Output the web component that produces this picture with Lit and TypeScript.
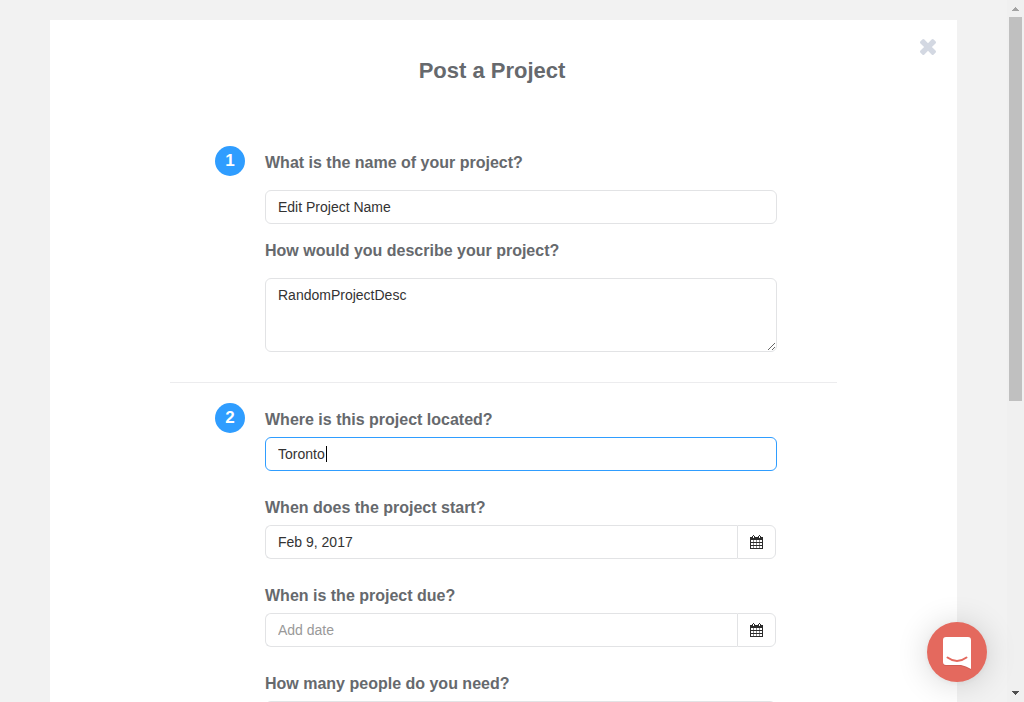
import { LitElement, html, css, svg } from "lit";
import { customElement } from "lit/decorators.js";

const calendarIcon = svg`
  <path d="M0 2h13v3H0zM0 5h1v9H0zM12 5h1v9h-1zM1 7h11v1H1zM1 10h11v1H1zM1 13h11v1H1z"/>
  <path d="M3 5h1v8H3zM6 5h1v8H6zM9 5h1v8H9z" opacity=".55"/>
  <path d="M2 1h1V0h1v1h1v3H2zM8 1h1V0h1v1h1v3H8z"/>
  <path d="M3 1h1v2H3zM9 1h1v2H9z" fill="#fff"/>`;

@customElement("app-root")
export class AppRoot extends LitElement {
  static styles = css`
    :host {
      display: grid;
      grid-template-columns: minmax(0, 1fr) 17px;
      height: 100vh;
      overflow: hidden;
      background: #f2f2f2;
      color: #66696d;
      font-family: "Liberation Sans", Arial, sans-serif;
    }
    * {
      box-sizing: border-box;
    }
    .page {
      min-height: 0;
      overflow: hidden;
      padding: 20px 50px 0;
    }
    .panel {
      background: #fff;
      padding-bottom: 60px;
    }
    .header {
      display: flex;
      align-items: flex-start;
      padding: 16px 20px 61px;
    }
    h1 {
      flex: 1;
      margin: 0;
      padding-top: 21px;
      font-size: 22px;
      line-height: 28px;
      text-align: center;
    }
    button {
      display: flex;
      align-items: center;
      justify-content: center;
      border: 0;
      padding: 0;
      background: none;
      cursor: pointer;
    }
    .close {
      width: 23px;
      height: 22px;
      justify-content: flex-end;
      padding-right: 1px;
      fill: #d3d8e2;
    }
    form {
      padding: 0 120px;
    }
    .step {
      display: grid;
      grid-template-columns: 30px minmax(0, 1fr);
      column-gap: 20px;
      padding: 0 60px 30px 45px;
    }
    .step + .step {
      border-top: 1px solid #ececee;
      padding-top: 20px;
    }
    .number {
      height: 30px;
      border-radius: 50%;
      background: #2f9dff;
      color: #fff;
      font-size: 17px;
      font-weight: bold;
      line-height: 29px;
      text-align: center;
    }
    .fields {
      display: grid;
      gap: 26px;
      padding-top: 6px;
    }
    .fields.roomy {
      gap: 16px;
    }
    .field {
      display: grid;
      gap: 6px;
    }
    .roomy .field {
      gap: 16px;
    }
    label {
      font-size: 16px;
      font-weight: bold;
      line-height: 22px;
    }
    input,
    textarea {
      display: block;
      width: 100%;
      height: 34px;
      margin: 0;
      border: 1px solid #e2e3e5;
      border-radius: 6px;
      padding: 6px 12px;
      background: #fff;
      color: #333;
      font: 14px/20px "Liberation Sans", Arial, sans-serif;
      outline: none;
    }
    textarea {
      height: 74px;
      resize: vertical;
    }
    ::placeholder {
      color: #999;
      opacity: 1;
    }
    .active {
      border-color: #2f9dff;
      background: linear-gradient(#000, #000) 60px 8px / 1px 16px no-repeat #fff;
    }
    .group {
      display: flex;
      margin-right: 1px;
    }
    .group input:not(:last-child) {
      flex: 1;
      min-width: 0;
      border-right: 0;
      border-radius: 6px 0 0 6px;
    }
    .pick {
      width: 39px;
      height: 34px;
      border: 1px solid #e2e3e5;
      border-radius: 0 6px 6px 0;
      fill: #2b2b2b;
    }
    .scrollbar {
      display: flex;
      flex-direction: column;
      align-items: center;
      background: #f0f0f0;
    }
    .arrow {
      width: 17px;
      height: 17px;
      fill: #a3a3a3;
    }
    .arrow.down {
      fill: #505050;
    }
    .track {
      flex: 1;
      width: 13px;
    }
    .thumb {
      height: 57.5%;
      background: #c0c0c0;
    }
    .chat {
      position: fixed;
      right: 37px;
      bottom: 20px;
      width: 60px;
      height: 60px;
      border-radius: 50%;
      background: #e4695e;
      box-shadow: 0 1px 6px rgba(0, 0, 0, 0.06), 0 2px 32px rgba(0, 0, 0, 0.16);
    }
  `;

  private dateField(id: string, label: string, value: string) {
    return html`<div class="field">
      <label for=${id}>${label}</label>
      <div class="group">
        <input id=${id} type="text" placeholder="Add date" .value=${value} />
        <button class="pick" type="button" aria-label="Choose date">
          <svg width="13" height="14" viewBox="0 0 13 14" shape-rendering="crispEdges">${calendarIcon}</svg>
        </button>
      </div>
    </div>`;
  }

  render() {
    return html`
      <main class="page">
        <div class="panel">
          <header class="header">
            <h1>Post a Project</h1>
            <button class="close" type="button" aria-label="Close">
              <svg width="16" height="16" viewBox="1 0.500 16 16">
                <path d="M1.500 4.900a1.500 1.500 0 0 1 0-2.100L3.300 1.100a1.500 1.500 0 0 1 2.100 0L9 4.700l3.600-3.600a1.500 1.500 0 0 1 2.100 0l1.800 1.700a1.500 1.500 0 0 1 0 2.100L12.900 8.500l3.600 3.600a1.500 1.500 0 0 1 0 2.100l-1.800 1.700a1.500 1.500 0 0 1-2.100 0L9 12.300l-3.600 3.600a1.500 1.500 0 0 1-2.100 0l-1.800-1.700a1.500 1.500 0 0 1 0-2.100l3.600-3.600z"/>
              </svg>
            </button>
          </header>
          <form>
            <section class="step">
              <div class="number">1</div>
              <div class="fields roomy">
                <div class="field">
                  <label for="name">What is the name of your project?</label>
                  <input id="name" type="text" value="Edit Project Name" />
                </div>
                <div class="field">
                  <label for="description">How would you describe your project?</label>
                  <textarea id="description" .value=${"RandomProjectDesc"}></textarea>
                </div>
              </div>
            </section>
            <section class="step">
              <div class="number">2</div>
              <div class="fields">
                <div class="field">
                  <label for="location">Where is this project located?</label>
                  <input id="location" class="active" type="text" value="Toronto" />
                </div>
                ${this.dateField("start", "When does the project start?", "Feb 9, 2017")}
                ${this.dateField("due", "When is the project due?", "")}
                <div class="field">
                  <label for="people">How many people do you need?</label>
                  <div class="group"><input id="people" type="text" /></div>
                </div>
              </div>
            </section>
          </form>
        </div>
      </main>
      <div class="scrollbar" aria-hidden="true">
        <svg class="arrow" viewBox="0 0 17 17" shape-rendering="crispEdges"><path d="M5 11h7v-1h-1v-1h-1v-1h-1v-1h-1v1h-1v1h-1v1h-1z"/></svg>
        <div class="track"><div class="thumb"></div></div>
        <svg class="arrow down" viewBox="0 0 17 17" shape-rendering="crispEdges"><path d="M5 6h7v1h-1v1h-1v1h-1v1h-1v-1h-1v-1h-1v-1h-1z"/></svg>
      </div>
      <button class="chat" type="button" aria-label="Open chat">
        <svg width="60" height="60" viewBox="0 0 60 60">
          <path d="M19 16h22a3 3 0 0 1 3 3v29q-5-3-10-4H19a3 3 0 0 1-3-3V19a3 3 0 0 1 3-3z" fill="#b94f47" opacity=".5"/>
          <path d="M19 15h22a3 3 0 0 1 3 3v29q-5-3-10-4H19a3 3 0 0 1-3-3V18a3 3 0 0 1 3-3z" fill="#fff"/>
          <path d="M20.500 35.500q9.500 7 19 0" fill="none" stroke="#e4695e" stroke-width="2" stroke-linecap="round"/>
        </svg>
      </button>
    `;
  }
}
